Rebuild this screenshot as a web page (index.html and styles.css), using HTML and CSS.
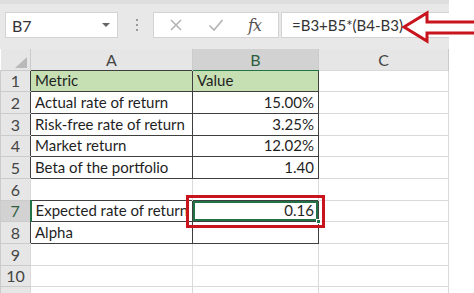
FILE: index.html
```html
<!DOCTYPE html>
<html lang="en">
<head>
    <meta charset="UTF-8" />
    <title>CAPM expected return</title>
    <link rel="stylesheet" href="styles.css">
</head>
<body>
    <div class="sheet">
        <div class="formula-bar">
            <div class="name-box">
                <span>B7</span>
                <span class="caret"></span>
            </div>
            <div class="grip"><i></i><i></i><i></i></div>
            <div class="fx-buttons">
                <svg class="fx-icon" width="14" height="14" viewBox="0 0 14 14">
                    <path d="M2 2 L12 12 M12 2 L2 12" />
                </svg>
                <svg class="fx-icon" width="16" height="14" viewBox="0 0 16 14">
                    <path d="M1.5 7.5 L6 12 L14.5 2" />
                </svg>
                <span class="fx-label">fx</span>
            </div>
            <div class="formula-input">=B3+B5*(B4-B3)</div>
            <svg class="callout-arrow" width="74" height="38" viewBox="0 0 74 38">
                <polygon points="4,18 27,4 27,13 80,13 80,24 27,24 27,32" />
            </svg>
        </div>

        <table class="grid">
            <colgroup>
                <col class="col-head">
                <col class="col-a">
                <col class="col-b">
                <col class="col-c">
            </colgroup>
            <thead>
                <tr>
                    <th class="corner"><span class="corner-mark"></span></th>
                    <th>A</th>
                    <th class="active">B</th>
                    <th>C</th>
                </tr>
            </thead>
            <tbody>
                <tr>
                    <td class="row-num">1</td>
                    <td class="boxed head-fill">Metric</td>
                    <td class="boxed head-fill">Value</td>
                    <td></td>
                </tr>
                <tr>
                    <td class="row-num">2</td>
                    <td class="boxed">Actual rate of return</td>
                    <td class="boxed num">15.00%</td>
                    <td></td>
                </tr>
                <tr>
                    <td class="row-num">3</td>
                    <td class="boxed">Risk-free rate of return</td>
                    <td class="boxed num">3.25%</td>
                    <td></td>
                </tr>
                <tr>
                    <td class="row-num">4</td>
                    <td class="boxed">Market return</td>
                    <td class="boxed num">12.02%</td>
                    <td></td>
                </tr>
                <tr>
                    <td class="row-num">5</td>
                    <td class="boxed">Beta of the portfolio</td>
                    <td class="boxed num">1.40</td>
                    <td></td>
                </tr>
                <tr>
                    <td class="row-num">6</td>
                    <td class="gap"></td>
                    <td class="gap"></td>
                    <td></td>
                </tr>
                <tr>
                    <td class="row-num active-row">7</td>
                    <td class="boxed">Expected rate of return</td>
                    <td class="boxed num selected">0.16<span class="fill-handle"></span></td>
                    <td></td>
                </tr>
                <tr>
                    <td class="row-num">8</td>
                    <td class="boxed">Alpha</td>
                    <td class="boxed"></td>
                    <td></td>
                </tr>
                <tr>
                    <td class="row-num">9</td>
                    <td></td>
                    <td></td>
                    <td></td>
                </tr>
                <tr>
                    <td class="row-num">10</td>
                    <td></td>
                    <td></td>
                    <td></td>
                </tr>
                <tr>
                    <td class="row-num"></td>
                    <td></td>
                    <td></td>
                    <td></td>
                </tr>
            </tbody>
        </table>

        <div class="callout-box"></div>
    </div>
</body>
</html>
```

FILE: styles.css
```css
:root {
    --bar-bg: #e8e8e8;
    --head-bg: #e6e6e6;
    --head-active: #d2d2d2;
    --grid-line: #dadada;
    --head-line: #cbcbcb;
    --ink: #1f1f1f;
    --table-line: #3f3f3f;
    --green: #217346;
    --green-fill: #c6e0b4;
    --callout: #c8141c;
}

* {
    margin: 0;
    padding: 0;
    box-sizing: border-box;
}

body {
    font-family: 'Lato', 'Liberation Sans', sans-serif;
    background: #ffffff;
    color: var(--ink);
    width: 474px;
    height: 293px;
    overflow: hidden;
}

.sheet {
    position: relative;
    width: 474px;
}

/* formula bar */

.formula-bar {
    position: relative;
    width: 449px;
    height: 49px;
    background: var(--bar-bg);
    border-top: 4px solid #dedede;
    display: flex;
    align-items: flex-start;
    padding-top: 8px;
}

.name-box {
    margin-left: 5px;
    width: 113px;
    height: 26px;
    background: #fff;
    border: 1px solid #d3d3d3;
    display: flex;
    align-items: center;
    justify-content: space-between;
    padding: 0 7px 0 6px;
    font-size: 16px;
    color: #333;
}

.caret {
    width: 0;
    height: 0;
    border-left: 4px solid transparent;
    border-right: 4px solid transparent;
    border-top: 4px solid #666;
}

.grip {
    margin-left: 17px;
    width: 4px;
    height: 26px;
    display: flex;
    flex-direction: column;
    justify-content: center;
    align-items: center;
    gap: 3px;
}

.grip i {
    width: 2px;
    height: 2px;
    background: #9a9a9a;
}

.fx-buttons {
    margin-left: 14px;
    width: 126px;
    height: 26px;
    background: #fff;
    border: 1px solid #d3d3d3;
    display: flex;
    align-items: center;
    padding-left: 15px;
}

.fx-icon {
    fill: none;
    stroke: #b3b3b3;
    stroke-width: 1.6;
}

.fx-icon + .fx-icon {
    margin-left: 25px;
}

.fx-label {
    margin-left: 24px;
    font-family: 'DejaVu Serif', 'Liberation Serif', serif;
    font-style: italic;
    font-size: 16px;
    color: #555;
    letter-spacing: -1px;
}

.formula-input {
    margin-left: 2px;
    flex: 1;
    height: 26px;
    background: #fff;
    border: 1px solid #d3d3d3;
    border-right: none;
    padding-left: 10px;
    font-size: 15px;
    line-height: 24px;
    color: #333;
}

.callout-arrow {
    position: absolute;
    left: 400px;
    top: 5px;
    overflow: hidden;
}

.callout-arrow polygon {
    fill: #fff;
    stroke: var(--callout);
    stroke-width: 3;
    stroke-linejoin: miter;
}

/* grid */

.grid {
    width: 448px;
    table-layout: fixed;
    border-collapse: collapse;
    font-size: 15px;
}

.col-head { width: 30px; }
.col-a { width: 162px; }
.col-b { width: 126px; }
.col-c { width: 130px; }

.grid th {
    height: 21px;
    background: var(--head-bg);
    border-right: 1px solid var(--head-line);
    font-weight: 400;
    font-size: 16px;
    color: #444;
    line-height: 20px;
    vertical-align: bottom;
}

.grid th.active {
    background: var(--head-active);
    color: #2c5f3f;
    border-bottom: 1px solid var(--green);
}

.grid th.corner {
    position: relative;
}

.corner-mark {
    position: absolute;
    right: 3px;
    bottom: 2px;
    width: 0;
    height: 0;
    border-left: 12px solid transparent;
    border-bottom: 11px solid #b9b9b9;
}

.grid tbody tr {
    height: 21.7px;
}

.grid td {
    border: 1px solid var(--grid-line);
    padding: 0 4px 1px 4px;
    line-height: 19px;
    vertical-align: bottom;
    white-space: nowrap;
    overflow: hidden;
}

.grid td.row-num {
    background: var(--head-bg);
    border-color: var(--head-line);
    border-right: none;
    text-align: center;
    padding: 0 0 1px 0;
    font-size: 16px;
    color: #444;
}

.grid td.row-num.active-row {
    background: var(--head-active);
    color: #2c5f3f;
    border-right: 2px solid var(--green);
}

.grid td.boxed {
    border-color: var(--table-line);
}

.grid td.gap {
    border-bottom: none;
}

.grid td.head-fill {
    background: var(--green-fill);
}

.grid td.num {
    text-align: right;
}

.grid td.selected {
    position: relative;
    overflow: visible;
    box-shadow: inset 0 0 0 2px var(--green);
}

.fill-handle {
    position: absolute;
    right: -3px;
    bottom: -3px;
    width: 5px;
    height: 5px;
    background: var(--green);
    border: 1px solid #fff;
}

.callout-box {
    position: absolute;
    left: 186px;
    top: 195px;
    width: 139px;
    height: 33px;
    border: 3px solid var(--callout);
}
```
